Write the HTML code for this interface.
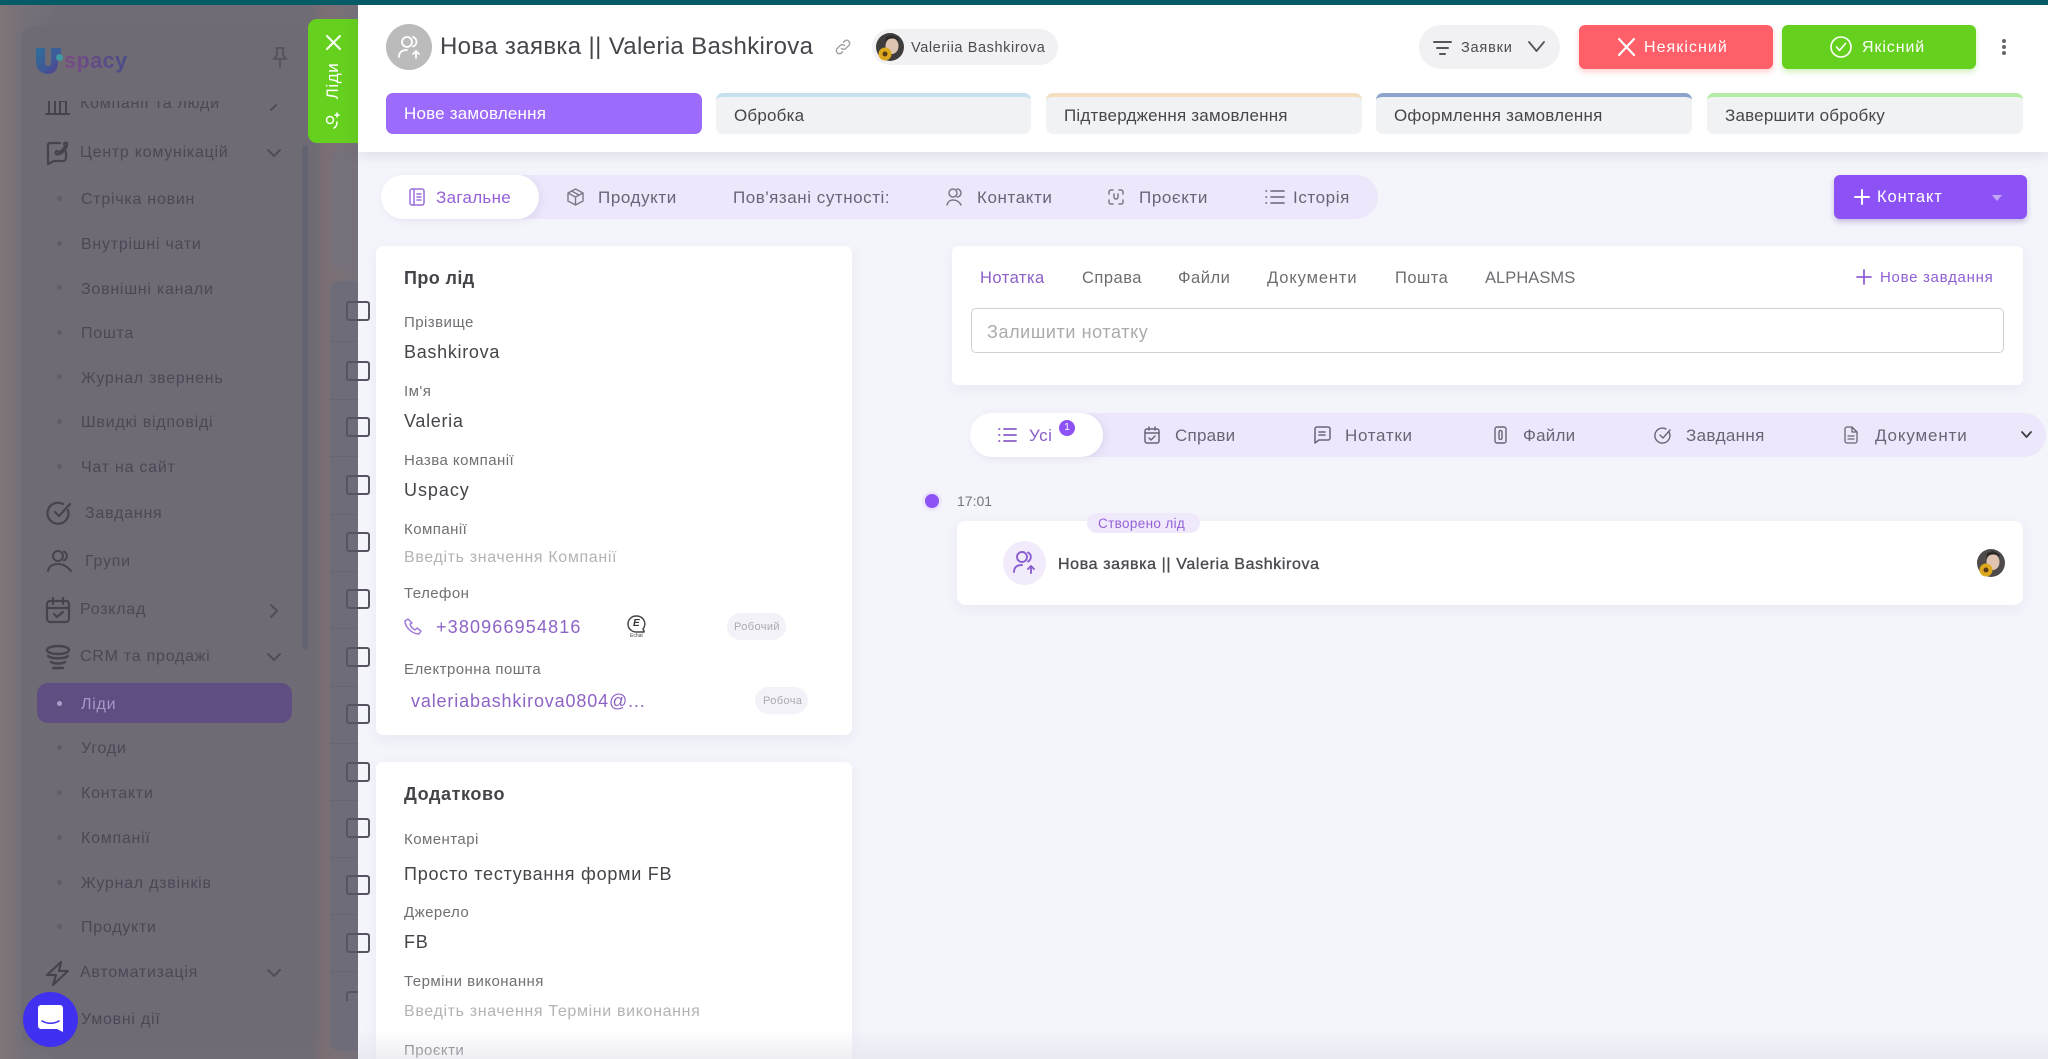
<!DOCTYPE html>
<html lang="uk"><head><meta charset="utf-8"><title>Uspacy</title>
<style>
*{box-sizing:border-box}
html,body{margin:0;padding:0;width:2048px;height:1059px;overflow:hidden;background:#f4f5fb;font-family:"Liberation Sans",sans-serif}
#root{position:relative;width:2048px;height:1059px;overflow:hidden;background:#f4f5fb}
.a{position:absolute}
.t{position:absolute;white-space:nowrap;line-height:0;margin-top:1px}
svg{position:absolute;fill:none;stroke:currentColor;stroke-width:1.8;stroke-linecap:round;stroke-linejoin:round;overflow:visible}
.s{font-size:16px;letter-spacing:.75px;color:#4b4855;margin-top:2px}
.sd{position:absolute;width:5px;height:5px;border-radius:50%;background:#5f5d69;left:57px}
.l{font-size:15px;letter-spacing:.45px;color:#707074}
.v{font-size:18px;letter-spacing:.7px;color:#444549}
.ph{font-size:16px;letter-spacing:.65px;color:#b3b3b6}
.st{position:absolute;top:93px;height:41px;background:#f1f2f4;border-radius:7px;border-top:4px solid}
.stt{font-size:17px;letter-spacing:.2px;color:#47474b;top:115px}
.tb{font-size:17px;letter-spacing:.6px;color:#6b6478;top:197px}
.nt{font-size:16.5px;letter-spacing:.5px;color:#6e6e72;top:277px}
.ft{font-size:17px;letter-spacing:.5px;color:#6b6478;top:435px}
.ck{position:absolute;left:346px;width:24px;height:20px;border:2px solid #565461;border-radius:3px}
.ln{position:absolute;left:330px;width:28px;height:1px;background:#686673}
</style></head><body><div id="root">

<!-- dimmed background -->
<div class="a" style="left:0;top:0;width:358px;height:1059px;background:linear-gradient(90deg,#807578 0,#77717a 20px,#706c75 60px,#706c75 312px,#7b6f74 326px,#76707a 358px)"></div>
<div class="a" style="left:22px;top:26px;width:292px;height:1021px;background:#6f6b75;border-radius:14px;box-shadow:0 0 8px #6f6b75"></div>
<div class="a" style="left:330px;top:150px;width:28px;height:120px;background:#75707a;border-radius:12px 0 0 12px"></div>
<div class="a" style="left:330px;top:281px;width:28px;height:770px;background:#6e6c78;border-radius:10px 0 0 10px"></div>
<div class="a" style="left:302px;top:145px;width:6px;height:505px;background:#646371;border-radius:3px"></div>

<div class="ck" style="top:301px"></div><div class="ck" style="top:361px"></div><div class="ck" style="top:417px"></div><div class="ck" style="top:475px"></div><div class="ck" style="top:532px"></div><div class="ck" style="top:589px"></div><div class="ck" style="top:647px"></div><div class="ck" style="top:704px"></div><div class="ck" style="top:762px"></div><div class="ck" style="top:818px"></div><div class="ck" style="top:875px"></div><div class="ck" style="top:933px"></div><div class="a" style="left:346px;top:991px;width:12px;height:10px;border:2px solid #565461;border-bottom:0;border-right:0;border-radius:3px 0 0 0"></div>
<div class="ln" style="top:341px"></div><div class="ln" style="top:399px"></div><div class="ln" style="top:456px"></div><div class="ln" style="top:514px"></div><div class="ln" style="top:571px"></div><div class="ln" style="top:628px"></div><div class="ln" style="top:686px"></div><div class="ln" style="top:743px"></div><div class="ln" style="top:800px"></div><div class="ln" style="top:857px"></div><div class="ln" style="top:914px"></div><div class="ln" style="top:971px"></div>

<!-- logo -->
<svg style="left:36px;top:48px;stroke:none" width="25" height="26" viewBox="0 0 25 26"><defs><linearGradient id="lg" x1="0" y1="0" x2="1" y2="1"><stop offset="0" stop-color="#2c6f9c"/><stop offset=".55" stop-color="#3f5a97"/><stop offset="1" stop-color="#5b3a8e"/></linearGradient></defs><path fill="url(#lg)" d="M0 0h9v14c0 3 1 4 3 4s3-1 3-4V0h10v7h-3v7c0 8-4 12-10 12S0 22 0 14z"/></svg>
<div class="a" style="left:56px;top:54px;width:7px;height:7px;border-radius:50%;background:#3f9aa3"></div>
<div class="t" style="left:64px;top:61px;font-size:22px;font-weight:700;letter-spacing:.2px;background:linear-gradient(90deg,#7c4a85,#4a4d88);-webkit-background-clip:text;background-clip:text;color:transparent;line-height:26px;margin-top:-13px">spacy</div>
<svg style="left:270px;top:46px;color:#55525e" width="20" height="22" viewBox="0 0 20 22"><path d="M6 2h8M7 2v7l-3 4h12l-3-4V2M10 13v8"/></svg>

<!-- sidebar clip -->
<div class="a" style="left:0;top:101px;width:300px;height:17px;overflow:hidden">
<div class="t s" style="left:80px;top:1px">Компанії та люди</div>
<svg style="left:46px;top:-8px;color:#46434f;stroke-width:2" width="23" height="23" viewBox="0 0 23 23"><path d="M0 21h23M3 21V2h6v19M14 21V8h6v13"/></svg>
<svg style="left:268px;top:-2px;color:#4f4d59;stroke-width:2" width="12" height="12" viewBox="0 0 12 12"><path d="M3 11l5-5"/></svg>
</div>

<div class="t s" style="left:80px;top:151px">Центр комунікацій</div>
<svg style="left:46px;top:140px;color:#46434f;stroke-width:2.2" width="24" height="26" viewBox="0 0 24 26"><path d="M14 3H4a2 2 0 0 0-2 2v19l6-3h9a3 3 0 0 0 3-3v-6"/><path d="M10 14c-1-1 0-3 1-3l2 1c3-1 5-3 6-6l-1-2c0-1 2-2 3-1 1 5-6 13-11 11z"/></svg>
<svg style="left:267px;top:149px;color:#4f4d59;stroke-width:2" width="14" height="8" viewBox="0 0 14 8"><path d="M1 1l6 6 6-6"/></svg>

<div class="sd" style="top:196px"></div><div class="t s" style="left:81px;top:198px">Стрічка новин</div>
<div class="sd" style="top:241px"></div><div class="t s" style="left:81px;top:243px">Внутрішні чати</div>
<div class="sd" style="top:285px"></div><div class="t s" style="left:81px;top:288px">Зовнішні канали</div>
<div class="sd" style="top:330px"></div><div class="t s" style="left:81px;top:332px">Пошта</div>
<div class="sd" style="top:374px"></div><div class="t s" style="left:81px;top:377px">Журнал звернень</div>
<div class="sd" style="top:419px"></div><div class="t s" style="left:81px;top:421px">Швидкі відповіді</div>
<div class="sd" style="top:464px"></div><div class="t s" style="left:81px;top:466px">Чат на сайт</div>

<div class="t s" style="left:85px;top:512px">Завдання</div>
<svg style="left:47px;top:501px;color:#46434f;stroke-width:2.2" width="25" height="25" viewBox="0 0 25 25"><path d="M21 9a10.5 10.5 0 1 1-5-6"/><path d="M8 11l4 4 11-12"/></svg>
<div class="t s" style="left:85px;top:560px">Групи</div>
<svg style="left:47px;top:549px;color:#46434f;stroke-width:2" width="25" height="24" viewBox="0 0 25 24"><circle cx="11" cy="7" r="5"/><path d="M17 2.5a5 5 0 0 1 0 9M1 22c1-5 5-7 10-7s9 2 13 7"/></svg>
<div class="t s" style="left:80px;top:608px">Розклад</div>
<svg style="left:46px;top:597px;color:#46434f;stroke-width:2.2" width="24" height="26" viewBox="0 0 24 26"><rect x="1" y="4" width="22" height="21" rx="3"/><path d="M1 11h22M7 1v6M17 1v6M8 17l3 3 6-5"/></svg>
<svg style="left:270px;top:604px;color:#4f4d59;stroke-width:2" width="8" height="14" viewBox="0 0 8 14"><path d="M1 1l6 6-6 6"/></svg>
<div class="t s" style="left:80px;top:655px">CRM та продажі</div>
<svg style="left:46px;top:645px;color:#46434f;stroke-width:2.4" width="24" height="25" viewBox="0 0 24 25"><ellipse cx="12" cy="5" rx="11" ry="4"/><path d="M2 11c3 3 17 3 20 0M5 17c3 2 11 2 14 0M7 23h10"/></svg>
<svg style="left:267px;top:653px;color:#4f4d59;stroke-width:2" width="14" height="8" viewBox="0 0 14 8"><path d="M1 1l6 6 6-6"/></svg>

<div class="a" style="left:37px;top:683px;width:255px;height:40px;background:#5f4e82;border-radius:11px"></div>
<div class="sd" style="top:701px;background:#a99ac7"></div><div class="t s" style="left:81px;top:703px;color:#a897c8">Ліди</div>
<div class="sd" style="top:745px"></div><div class="t s" style="left:81px;top:747px">Угоди</div>
<div class="sd" style="top:790px"></div><div class="t s" style="left:81px;top:792px">Контакти</div>
<div class="sd" style="top:835px"></div><div class="t s" style="left:81px;top:837px">Компанії</div>
<div class="sd" style="top:880px"></div><div class="t s" style="left:81px;top:882px">Журнал дзвінків</div>
<div class="sd" style="top:924px"></div><div class="t s" style="left:81px;top:926px">Продукти</div>
<div class="t s" style="left:80px;top:971px">Автоматизація</div>
<svg style="left:46px;top:961px;color:#46434f;stroke-width:2.2" width="23" height="25" viewBox="0 0 23 25"><path d="M15 1L1 14h9l-3 10 15-14h-9l2-9"/></svg>
<svg style="left:267px;top:969px;color:#4f4d59;stroke-width:2" width="14" height="8" viewBox="0 0 14 8"><path d="M1 1l6 6 6-6"/></svg>
<div class="t s" style="left:81px;top:1018px">Умовні дії</div>

<!-- chat launcher -->
<div class="a" style="left:23px;top:992px;width:55px;height:55px;border-radius:50%;background:#4030ef"></div>
<svg style="left:38px;top:1005px;stroke:none" width="25" height="27" viewBox="0 0 25 27"><path fill="#fff" d="M3 0h19a3 3 0 0 1 3 3v24l-6-3H3a3 3 0 0 1-3-3V3a3 3 0 0 1 3-3z"/><path d="M4 16c5 3 12 3 17 0" stroke="#4030ef" stroke-width="1.6" fill="none"/></svg>

<!-- green tab -->
<div class="a" style="left:308px;top:19px;width:50px;height:124px;background:#65d01e;border-radius:9px 0 0 9px"></div>
<svg style="left:327px;top:36px;color:#fff;stroke-width:2" width="13" height="13" viewBox="0 0 13 13"><path d="M0 0l13 13M13 0L0 13"/></svg>
<div class="t" style="left:333px;top:80px;transform:translate(-50%,0) rotate(-90deg);font-size:17px;letter-spacing:.6px;color:#fff">Ліди</div>
<svg style="left:326px;top:112px;color:#fff;stroke-width:1.5" width="15" height="16" viewBox="0 0 15 16"><circle cx="4" cy="8" r="3.5"/><path d="M8 16c2-1 3-3 3-6M11 5V1M9 3h4"/></svg>

<!-- top bar -->
<div class="a" style="left:0;top:0;width:2048px;height:5px;background:#055c66"></div>

<!-- header panel -->
<div class="a" style="left:358px;top:5px;width:1690px;height:147px;background:#fff;box-shadow:0 4px 12px rgba(90,90,120,.14)"></div>
<div class="a" style="left:386px;top:24px;width:46px;height:46px;border-radius:50%;background:#bbbbbc"></div>
<svg style="left:397px;top:35px;color:#fff;stroke-width:1.8" width="25" height="25" viewBox="0 0 25 25"><circle cx="10" cy="7" r="5"/><path d="M16 2a5 5 0 0 1 0 9.5M2 22c0-5 3-7 8-7M19 23v-7M16 19l3-3 3 3"/></svg>
<div class="t" style="left:440px;top:46px;font-size:24px;letter-spacing:.35px;color:#45464b">Нова заявка || Valeria Bashkirova</div>
<svg style="left:835px;top:39px;color:#a4a4a8;stroke-width:1.5" width="16" height="16" viewBox="0 0 16 16"><path d="M6.5 9.5a3 3 0 0 0 4.300 0l3-3a3 3 0 0 0-4.300-4.300l-1 1M9.500 6.500a3 3 0 0 0-4.300 0l-3 3a3 3 0 0 0 4.300 4.300l1-1"/></svg>
<div class="a" style="left:872px;top:29px;width:186px;height:36px;border-radius:18px;background:#f1f1f3"></div>
<svg style="left:876px;top:33px;stroke:none" width="28" height="28" viewBox="0 0 28 28"><circle cx="14" cy="14" r="14" fill="#3f3c3c"/><ellipse cx="16" cy="13" rx="6.500" ry="8" fill="#e0c4b2"/><path d="M9 10c2-5 9-6 14-2l-1-3-6-3-6 2z" fill="#2d2a2a"/><circle cx="9" cy="21" r="6.500" fill="#dba81e"/><circle cx="9" cy="21" r="2.500" fill="#5a3a14"/></svg>
<div class="t" style="left:911px;top:47px;font-size:14.500px;letter-spacing:.6px;color:#4b4b50">Valeriia Bashkirova</div>

<div class="a" style="left:1419px;top:25px;width:141px;height:44px;border-radius:22px;background:#f1f1f3"></div>
<svg style="left:1434px;top:41px;color:#55555a;stroke-width:2" width="17" height="15" viewBox="0 0 17 15"><path d="M0 1h17M3 7h11M6 13h5"/></svg>
<div class="t" style="left:1461px;top:47px;font-size:14.500px;letter-spacing:.8px;color:#4b4b50">Заявки</div>
<svg style="left:1528px;top:41px;color:#55555a;stroke-width:1.800" width="17" height="11" viewBox="0 0 17 11"><path d="M1 1l7.500 9L16 1"/></svg>

<div class="a" style="left:1579px;top:25px;width:194px;height:44px;border-radius:6px;background:#ff5f68;box-shadow:0 3px 6px rgba(255,95,104,.3)"></div>
<svg style="left:1619px;top:39px;color:#fff;stroke-width:2.200" width="15" height="16" viewBox="0 0 15 16"><path d="M0 0l15 16M15 0L0 16"/></svg>
<div class="t" style="left:1644px;top:47px;font-size:16px;letter-spacing:1.05px;color:#fff">Неякісний</div>
<div class="a" style="left:1782px;top:25px;width:194px;height:44px;border-radius:6px;background:#65d01e;box-shadow:0 3px 6px rgba(101,208,30,.3)"></div>
<svg style="left:1830px;top:36px;color:#fff;stroke-width:1.600" width="22" height="22" viewBox="0 0 22 22"><circle cx="11" cy="11" r="10"/><path d="M6.500 11l3 3.500 6-7"/></svg>
<div class="t" style="left:1862px;top:47px;font-size:16px;letter-spacing:.9px;color:#fff">Якісний</div>
<div class="a" style="left:2002px;top:39px;width:4px;height:4px;border-radius:50%;background:#66666b"></div><div class="a" style="left:2002px;top:45px;width:4px;height:4px;border-radius:50%;background:#66666b"></div><div class="a" style="left:2002px;top:51px;width:4px;height:4px;border-radius:50%;background:#66666b"></div>

<!-- stages -->
<div class="a" style="left:386px;top:93px;width:316px;height:41px;background:#9d6bfb;border-radius:7px"></div>
<div class="t stt" style="left:404px;top:113px;color:#fff">Нове замовлення</div>
<div class="st" style="left:716px;width:315px;border-color:#c5e1ef"></div><div class="t stt" style="left:734px">Обробка</div>
<div class="st" style="left:1046px;width:316px;border-color:#f4dfc0"></div><div class="t stt" style="left:1064px">Підтвердження замовлення</div>
<div class="st" style="left:1376px;width:316px;border-color:#8aa4cc"></div><div class="t stt" style="left:1394px">Оформлення замовлення</div>
<div class="st" style="left:1707px;width:316px;border-color:#b3eca5"></div><div class="t stt" style="left:1725px">Завершити обробку</div>

<!-- main tabs -->
<div class="a" style="left:381px;top:175px;width:997px;height:44px;border-radius:22px;background:#ece7fa"></div>
<div class="a" style="left:381px;top:175px;width:158px;height:44px;border-radius:22px;background:#fff;box-shadow:2px 2px 8px rgba(120,100,180,.12)"></div>
<svg style="left:409px;top:188px;color:#9c6fdc;stroke-width:1.500" width="16" height="18" viewBox="0 0 16 18"><rect x="1" y="1" width="14" height="16" rx="2"/><path d="M5 1v16M8 6h4M8 9h4M8 12h4"/></svg>
<div class="t tb" style="left:436px;color:#9560d8;letter-spacing:.3px">Загальне</div>
<svg style="left:567px;top:188px;color:#7d7788;stroke-width:1.400" width="17" height="18" viewBox="0 0 17 18"><path d="M8.500 1L16 5v8l-7.500 4L1 13V5zM1 5l7.500 4L16 5M8.500 9v8M4.500 3l7.500 4"/></svg>
<div class="t tb" style="left:598px">Продукти</div>
<div class="t tb" style="left:733px;letter-spacing:.55px">Пов'язані сутності:</div>
<svg style="left:946px;top:188px;color:#7d7788;stroke-width:1.500" width="16" height="18" viewBox="0 0 16 18"><circle cx="7" cy="5" r="4"/><path d="M11 1a4 4 0 0 1 0 8M1 17c1-4 3-5 6-5s6 1 8 5"/></svg>
<div class="t tb" style="left:977px">Контакти</div>
<svg style="left:1108px;top:189px;color:#7d7788;stroke-width:1.500" width="16" height="16" viewBox="0 0 16 16"><path d="M1 5V3a2 2 0 0 1 2-2h2M11 1h2a2 2 0 0 1 2 2v2M15 11v2a2 2 0 0 1-2 2h-2M5 15H3a2 2 0 0 1-2-2v-2M6 5v3a2 2 0 0 0 4 0V5"/></svg>
<div class="t tb" style="left:1139px">Проєкти</div>
<svg style="left:1265px;top:190px;color:#6b6478;stroke-width:1.600" width="19" height="14" viewBox="0 0 19 14"><path d="M6 1h13M6 7h13M6 13h13M1 1h.5M1 7h.5M1 13h.5"/></svg>
<div class="t tb" style="left:1293px">Історія</div>

<div class="a" style="left:1834px;top:175px;width:193px;height:44px;border-radius:6px;background:#8c52f5;box-shadow:0 3px 6px rgba(90,60,160,.3)"></div>
<svg style="left:1855px;top:190px;color:#fff;stroke-width:2" width="14" height="14" viewBox="0 0 14 14"><path d="M7 0v14M0 7h14"/></svg>
<div class="t" style="left:1877px;top:196px;font-size:16.500px;letter-spacing:.9px;color:#fff">Контакт</div>
<div class="a" style="left:1992px;top:195px;border-left:5.500px solid transparent;border-right:5.500px solid transparent;border-top:6px solid #c2a6f7"></div>

<!-- card: about -->
<div class="a" style="left:376px;top:246px;width:476px;height:489px;background:#fff;border-radius:7px;box-shadow:0 4px 14px rgba(110,110,160,.09)"></div>
<div class="t" style="left:404px;top:277px;font-size:18px;font-weight:700;letter-spacing:.4px;color:#434448">Про лід</div>
<div class="t l" style="left:404px;top:322px">Прізвище</div><div class="t v" style="left:404px;top:351px">Bashkirova</div>
<div class="t l" style="left:404px;top:391px">Ім'я</div><div class="t v" style="left:404px;top:420px">Valeria</div>
<div class="t l" style="left:404px;top:460px">Назва компанії</div><div class="t v" style="left:404px;top:489px;letter-spacing:.95px">Uspacy</div>
<div class="t l" style="left:404px;top:529px">Компанії</div><div class="t ph" style="left:404px;top:557px">Введіть значення Компанії</div>
<div class="t l" style="left:404px;top:593px">Телефон</div>
<svg style="left:404px;top:618px;color:#a07ad8;stroke-width:1.500" width="18" height="17" viewBox="0 0 18 17"><path d="M4 1L1 3c0 6 7 13 14 13l2-3-4-3-2 2c-2-1-4-3-5-6l2-1z"/></svg>
<div class="t v" style="left:436px;top:626px;color:#8e63c6;font-size:18px;letter-spacing:1.15px">+380966954816</div>
<svg style="left:627px;top:615px;color:#444;stroke-width:1.500" width="18" height="18" viewBox="0 0 18 18"><path d="M9 1a8 8 0 1 0 0 16h8v-1l-1-2A8 8 0 0 0 9 1z"/></svg>
<div class="t" style="left:633px;top:623px;font-size:10px;font-style:italic;font-weight:700;color:#333">E</div>
<div class="t" style="left:630px;top:635px;font-size:5px;color:#444">Echat</div>
<div class="a" style="left:727px;top:613px;width:59px;height:27px;border-radius:14px;background:#f3f2f8"></div>
<div class="t" style="left:734px;top:626px;font-size:11px;letter-spacing:.4px;color:#aaaab0">Робочий</div>
<div class="t l" style="left:404px;top:669px">Електронна пошта</div>
<div class="t v" style="left:411px;top:700px;color:#8e63c6;letter-spacing:.85px">valeriabashkirova0804@...</div>
<div class="a" style="left:755px;top:687px;width:53px;height:27px;border-radius:14px;background:#f3f2f8"></div>
<div class="t" style="left:763px;top:700px;font-size:11px;letter-spacing:.4px;color:#aaaab0">Робоча</div>

<!-- card: extra -->
<div class="a" style="left:376px;top:762px;width:476px;height:297px;background:#fff;border-radius:7px 7px 0 0;box-shadow:0 4px 14px rgba(110,110,160,.09)"></div>
<div class="t" style="left:404px;top:793px;font-size:18px;font-weight:700;letter-spacing:.6px;color:#434448">Додатково</div>
<div class="t l" style="left:404px;top:839px">Коментарі</div><div class="t v" style="left:404px;top:873px;letter-spacing:.75px">Просто тестування форми FB</div>
<div class="t l" style="left:404px;top:912px">Джерело</div><div class="t v" style="left:404px;top:941px">FB</div>
<div class="t l" style="left:404px;top:981px">Терміни виконання</div><div class="t ph" style="left:404px;top:1011px">Введіть значення Терміни виконання</div>
<div class="t l" style="left:404px;top:1050px">Проєкти</div>

<!-- note card -->
<div class="a" style="left:952px;top:246px;width:1071px;height:139px;background:#fff;border-radius:6px;box-shadow:0 4px 14px rgba(110,110,160,.09)"></div>
<div class="t nt" style="left:980px;color:#8b5fc8">Нотатка</div>
<div class="t nt" style="left:1082px">Справа</div>
<div class="t nt" style="left:1178px">Файли</div>
<div class="t nt" style="left:1267px;letter-spacing:.9px">Документи</div>
<div class="t nt" style="left:1395px">Пошта</div>
<div class="t nt" style="left:1485px;letter-spacing:.05px">ALPHASMS</div>
<svg style="left:1857px;top:270px;color:#8f5fd6;stroke-width:1.800" width="14" height="14" viewBox="0 0 14 14"><path d="M7 0v14M0 7h14"/></svg>
<div class="t" style="left:1880px;top:277px;font-size:15px;letter-spacing:.7px;color:#8f5fd6">Нове завдання</div>
<div class="a" style="left:971px;top:308px;width:1033px;height:45px;background:#fff;border:1.500px solid #d0d0d2;border-radius:5px"></div>
<div class="t" style="left:987px;top:331px;font-size:18px;letter-spacing:.6px;color:#ababae">Залишити нотатку</div>

<!-- feed tabs -->
<div class="a" style="left:970px;top:413px;width:1076px;height:44px;border-radius:22px;background:#ece7fa"></div>
<div class="a" style="left:970px;top:413px;width:133px;height:44px;border-radius:22px;background:#fff;box-shadow:2px 2px 8px rgba(120,100,180,.12)"></div>
<svg style="left:998px;top:428px;color:#8b5fc8;stroke-width:1.800" width="18" height="14" viewBox="0 0 18 14"><path d="M6 1h12M6 7h12M6 13h12M1 1h.5M1 7h.5M1 13h.5"/></svg>
<div class="t ft" style="left:1029px;color:#8b5fc8">Усі</div>
<div class="a" style="left:1059px;top:420px;width:16px;height:16px;border-radius:50%;background:#8c52f5;color:#fff;font-size:10px;line-height:16px;text-align:center">1</div>
<svg style="left:1144px;top:426px;color:#6b6478;stroke-width:1.500" width="16" height="18" viewBox="0 0 16 18"><rect x="1" y="3" width="14" height="14" rx="2"/><path d="M1 7h14M5 1v3M11 1v3M5 12l2 2 4-4"/></svg>
<div class="t ft" style="left:1175px;letter-spacing:.25px">Справи</div>
<svg style="left:1314px;top:426px;color:#6b6478;stroke-width:1.500" width="17" height="18" viewBox="0 0 17 18"><path d="M3 1h11a2 2 0 0 1 2 2v9a2 2 0 0 1-2 2H5l-4 3V3a2 2 0 0 1 2-2zM5 6h6M5 9h6"/></svg>
<div class="t ft" style="left:1345px;letter-spacing:.7px">Нотатки</div>
<svg style="left:1494px;top:426px;color:#6b6478;stroke-width:1.400" width="13" height="18" viewBox="0 0 13 18"><rect x="1" y="1" width="11" height="16" rx="2"/><path d="M5 6v6a1.500 1.500 0 0 0 3 0V6a1.500 1.500 0 0 0-3 0"/></svg>
<div class="t ft" style="left:1523px;letter-spacing:.2px">Файли</div>
<svg style="left:1655px;top:427px;color:#6b6478;stroke-width:1.400" width="17" height="17" viewBox="0 0 17 17"><path d="M14 5a7.500 7.500 0 1 1-3-3"/><path d="M5 8l3 3 7-8"/></svg>
<div class="t ft" style="left:1686px;letter-spacing:.35px">Завдання</div>
<svg style="left:1844px;top:426px;color:#6b6478;stroke-width:1.300" width="14" height="18" viewBox="0 0 14 18"><path d="M8 1H3a2 2 0 0 0-2 2v12a2 2 0 0 0 2 2h8a2 2 0 0 0 2-2V6zM8 1v5h5M4 10h6M4 13h6"/></svg>
<div class="t ft" style="left:1875px;letter-spacing:.85px">Документи</div>
<svg style="left:2021px;top:431px;color:#3e3e44;stroke-width:1.800" width="11" height="7" viewBox="0 0 11 7"><path d="M1 1l4.500 5L10 1"/></svg>

<!-- timeline -->
<div class="a" style="left:922px;top:491px;width:20px;height:20px;border-radius:50%;background:#ece5fb"></div>
<div class="a" style="left:925px;top:494px;width:14px;height:14px;border-radius:50%;background:#8c52f5"></div>
<div class="t" style="left:957px;top:500px;font-size:14px;letter-spacing:0;color:#75757a">17:01</div>
<div class="a" style="left:957px;top:521px;width:1066px;height:84px;background:#fff;border-radius:9px;box-shadow:0 4px 14px rgba(110,110,160,.09)"></div>
<div class="a" style="left:1087px;top:513px;width:113px;height:20px;border-radius:10px;background:#f0e9fb"></div>
<div class="t" style="left:1098px;top:523px;font-size:13.500px;letter-spacing:.35px;color:#9560d8">Створено лід</div>
<div class="a" style="left:1003px;top:541px;width:43px;height:44px;border-radius:50%;background:#f1ebfb"></div>
<svg style="left:1012px;top:551px;color:#8b5fd0;stroke-width:1.900" width="25" height="23" viewBox="0 0 25 23"><circle cx="10" cy="6" r="5"/><path d="M16 1.500a5 5 0 0 1 0 9M2 21c0-5 3-7 8-7M19 22v-7M16 18l3-3 3 3"/></svg>
<div class="t" style="left:1058px;top:564px;font-size:16px;letter-spacing:.62px;color:#4a4a4f;-webkit-text-stroke:.35px #4a4a4f">Нова заявка || Valeria Bashkirova</div>
<svg style="left:1977px;top:549px;stroke:none" width="28" height="28" viewBox="0 0 28 28"><circle cx="14" cy="14" r="14" fill="#4e4b4a"/><ellipse cx="16" cy="13" rx="6.500" ry="8" fill="#e0c4b2"/><path d="M9 10c2-5 9-6 14-2l-1-3-6-3-6 2z" fill="#2d2a2a"/><circle cx="9" cy="21" r="6.500" fill="#dba81e"/><circle cx="9" cy="21" r="2.500" fill="#5a3a14"/></svg>

<!-- bottom fade -->
<div class="a" style="left:358px;top:1030px;width:1690px;height:29px;background:linear-gradient(180deg,rgba(235,235,242,0),rgba(225,225,234,.55))"></div>
</div></body></html>
